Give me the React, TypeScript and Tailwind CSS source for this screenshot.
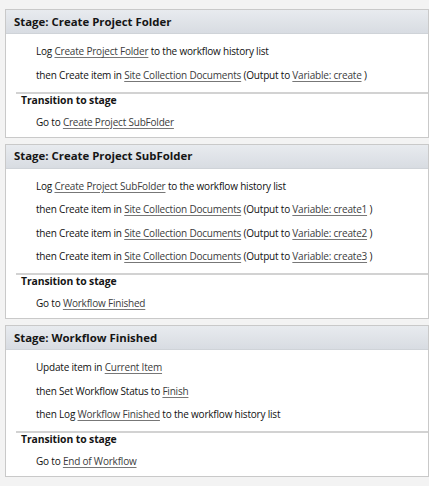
import React from "react";

const L = ({ children }: { children: React.ReactNode }) => (
  <span className="underline decoration-[#777] underline-offset-2 text-[#3c3c3c]">{children}</span>
);

type Stage = {
  title: string;
  lines: React.ReactNode[];
  goto: string;
};

const stages: Stage[] = [
  {
    title: "Stage: Create Project Folder",
    lines: [
      <>Log <L>Create Project Folder</L> to the workflow history list</>,
      <>then Create item in <L>Site Collection Documents</L> (Output to <L>Variable: create</L> )</>,
    ],
    goto: "Create Project SubFolder",
  },
  {
    title: "Stage: Create Project SubFolder",
    lines: [
      <>Log <L>Create Project SubFolder</L> to the workflow history list</>,
      <>then Create item in <L>Site Collection Documents</L> (Output to <L>Variable: create1</L> )</>,
      <>then Create item in <L>Site Collection Documents</L> (Output to <L>Variable: create2</L> )</>,
      <>then Create item in <L>Site Collection Documents</L> (Output to <L>Variable: create3</L> )</>,
    ],
    goto: "Workflow Finished",
  },
  {
    title: "Stage: Workflow Finished",
    lines: [
      <>Update item in <L>Current Item</L></>,
      <>then Set Workflow Status to <L>Finish</L></>,
      <>then Log <L>Workflow Finished</L> to the workflow history list</>,
    ],
    goto: "End of Workflow",
  },
];

function Panel({ s }: { s: Stage }) {
  return (
    <div className="border border-[#c9c9c9] bg-white">
      <div className="h-[24px] flex items-center pl-[8px] font-bold text-[11.4px] text-[#151515] bg-gradient-to-b from-[#e8ebef] to-[#d8dce2] border-b border-[#cfd3d8]">
        {s.title}
      </div>
      <div className="pt-[9px] pb-[9px] pl-[30px] flex flex-col gap-[7.5px] text-[10px] tracking-[-0.2px] text-[#111] font-medium">
        {s.lines.map((l, i) => (
          <div key={i} className="leading-[16px]">{l}</div>
        ))}
      </div>
      <div className="ml-[10px] border-t-2 border-[#d2d2d2] pb-[7px]">
        <div className="pl-[5px] font-bold text-[10.4px] tracking-[-0.1px] text-[#151515] leading-[13px]">Transition to stage</div>
        <div className="pl-[20px] mt-[7px] text-[10px] tracking-[-0.2px] text-[#111] font-medium leading-[16px]">
          Go to <L>{s.goto}</L>
        </div>
      </div>
    </div>
  );
}

export default function App() {
  return (
    <div
      className="w-[429px] h-[486px] bg-[#f3f3f3] pt-[9px] pl-[5px] flex flex-col gap-[6px]"
      style={{ fontFamily: '"Open Sans", "Noto Sans", sans-serif' }}
    >
      {stages.map((s, i) => (
        <Panel key={i} s={s} />
      ))}
    </div>
  );
}
